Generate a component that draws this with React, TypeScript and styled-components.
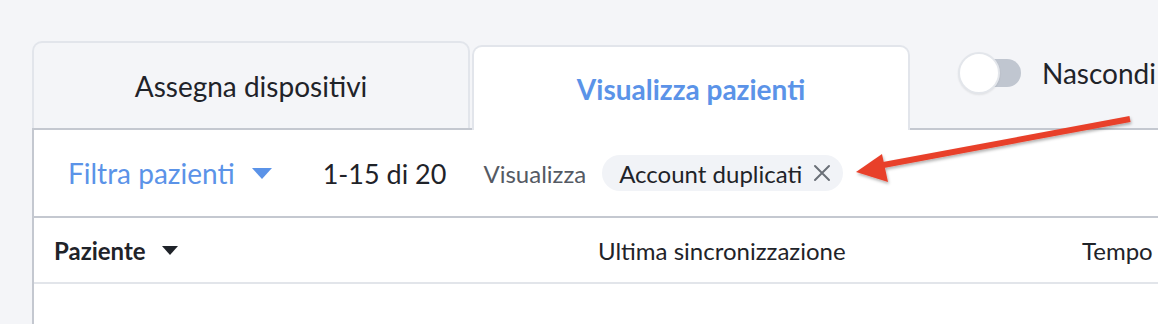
import React from "react";
import styled, { createGlobalStyle } from "styled-components";

const Global = createGlobalStyle`
  html, body { margin: 0; padding: 0; }
  body {
    background: #f4f5f8;
    font-family: Lato, "Open Sans", "Liberation Sans", sans-serif;
    color: #1f2329;
    -webkit-font-smoothing: antialiased;
  }
`;

const Page = styled.div`
  position: relative;
  width: 1158px;
  height: 324px;
  overflow: hidden;
  padding: 40px 0 0 32px;
  box-sizing: border-box;
`;

const TabBar = styled.div`
  display: flex;
  align-items: flex-end;
  height: 88px;
  position: relative;
  z-index: 1;
`;

const Tab = styled.div<{ $active?: boolean }>`
  flex: none;
  box-sizing: border-box;
  width: 438px;
  height: ${(p) => (p.$active ? "85px" : "87px")};
  margin-left: ${(p) => (p.$active ? "2px" : "0")};
  margin-bottom: ${(p) => (p.$active ? "-2px" : "0")};
  border: 2px solid #e2e5eb;
  border-bottom: none;
  border-radius: 10px 10px 0 0;
  background: ${(p) => (p.$active ? "#ffffff" : "#f4f5f8")};
  display: flex;
  align-items: center;
  justify-content: center;
  font-size: 28px;
  font-weight: ${(p) => (p.$active ? 700 : 400)};
  color: ${(p) => (p.$active ? "#5b93e8" : "#1f2329")};
  white-space: nowrap;
`;

const ToggleGroup = styled.div`
  flex: none;
  display: flex;
  align-items: center;
  gap: 20px;
  margin-left: 48px;
  align-self: flex-start;
  margin-top: 12px;
  white-space: nowrap;
`;

const Switch = styled.div`
  position: relative;
  width: 64px;
  height: 42px;
  flex: none;
`;

const Track = styled.div`
  position: absolute;
  left: 4px;
  top: 7px;
  width: 59px;
  height: 28px;
  border-radius: 14px;
  background: #c0c6d0;
`;

const Knob = styled.div`
  position: absolute;
  left: 0;
  top: 0;
  width: 38px;
  height: 38px;
  border-radius: 50%;
  background: #ffffff;
  border: 2px solid #e3e6eb;
  box-shadow: 0 1px 2px rgba(0, 0, 0, 0.08);
`;

const SwitchLabel = styled.span`
  font-size: 28px;
  color: #1f2329;
`;

const Panel = styled.div`
  background: #ffffff;
  border-top: 2px solid #c4c8d0;
  border-left: 2px solid #c4c8d0;
  height: 300px;
`;

const Toolbar = styled.div`
  display: flex;
  align-items: center;
  height: 86px;
  padding-left: 34px;
  border-bottom: 2px solid #c4c8d0;
  white-space: nowrap;
`;

const FilterButton = styled.div`
  display: flex;
  align-items: center;
  gap: 17px;
  font-size: 28px;
  color: #5b93e8;
`;

const Count = styled.span`
  margin-left: 51px;
  font-size: 27px;
  color: #1f2329;
`;

const ViewLabel = styled.span`
  margin-left: 37px;
  font-size: 24px;
  color: #555a63;
`;

const Chip = styled.div`
  margin-left: 16px;
  display: flex;
  align-items: center;
  gap: 11px;
  height: 36px;
  padding: 0 12px 0 17px;
  border-radius: 18px;
  background: #f1f3f7;
  font-size: 24px;
  color: #1f2329;
`;

const HeaderRow = styled.div`
  display: grid;
  grid-template-columns: 544px 484px 1fr;
  align-items: center;
  height: 64px;
  padding-left: 20px;
  border-bottom: 2px solid #e2e5ea;
  white-space: nowrap;
`;

const HeaderCell = styled.div<{ $bold?: boolean }>`
  display: flex;
  align-items: center;
  gap: 16px;
  font-size: 24px;
  font-weight: ${(p) => (p.$bold ? 700 : 400)};
  color: #1f2329;
`;

const ArrowLayer = styled.svg`
  position: absolute;
  left: 0;
  top: 0;
  pointer-events: none;
  z-index: 5;
`;

const Caret = ({ color, w, h }: { color: string; w: number; h: number }) => (
  <svg width={w} height={h} viewBox={`0 0 ${w} ${h}`}>
    <polygon points={`0,0 ${w},0 ${w / 2},${h}`} fill={color} />
  </svg>
);

export default function App() {
  return (
    <>
      <Global />
      <Page>
        <TabBar>
          <Tab>Assegna dispositivi</Tab>
          <Tab $active>Visualizza pazienti</Tab>
          <ToggleGroup>
            <Switch>
              <Track />
              <Knob />
            </Switch>
            <SwitchLabel>Nascondi</SwitchLabel>
          </ToggleGroup>
        </TabBar>
        <Panel>
          <Toolbar>
            <FilterButton>
              Filtra pazienti
              <Caret color="#5b93e8" w={20} h={11} />
            </FilterButton>
            <Count>1-15 di 20</Count>
            <ViewLabel>Visualizza</ViewLabel>
            <Chip>
              Account duplicati
              <svg width="18" height="18" viewBox="0 0 18 18">
                <path d="M2 2 L16 16 M16 2 L2 16" stroke="#6b7078" strokeWidth="2" strokeLinecap="round" />
              </svg>
            </Chip>
          </Toolbar>
          <HeaderRow>
            <HeaderCell $bold>
              Paziente
              <Caret color="#1f2329" w={16} h={9} />
            </HeaderCell>
            <HeaderCell>Ultima sincronizzazione</HeaderCell>
            <HeaderCell>Tempo</HeaderCell>
          </HeaderRow>
        </Panel>
        <ArrowLayer width="1158" height="324" viewBox="0 0 1158 324">
          <defs>
            <filter id="sh" x="-10%" y="-50%" width="120%" height="200%">
              <feDropShadow dx="1" dy="2" stdDeviation="1.5" floodColor="#000" floodOpacity="0.3" />
            </filter>
          </defs>
          <g filter="url(#sh)">
            <line x1="1130" y1="119" x2="878" y2="166" stroke="#e8412c" strokeWidth="6" />
            <polygon points="856,172 882,154 888,182" fill="#e8412c" />
          </g>
        </ArrowLayer>
      </Page>
    </>
  );
}
